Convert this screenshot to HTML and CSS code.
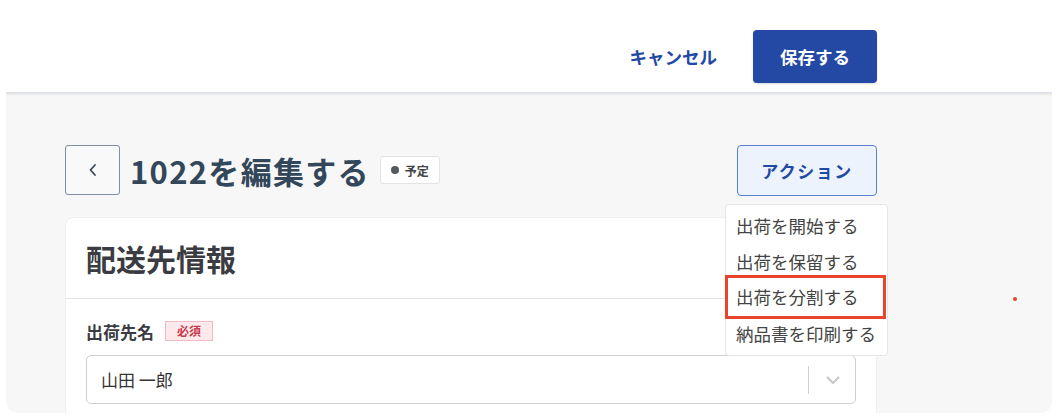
FILE: index.html
```html
<!DOCTYPE html>
<html lang="ja">
<head>
<meta charset="utf-8">
<link rel="stylesheet" href="styles.css">
</head>
<body>
<div class="frame">
  <header class="topbar">
    <div class="topbar-inner">
      <button class="btn-cancel">キャンセル</button>
      <button class="btn-save">保存する</button>
    </div>
  </header>
  <main class="main">
    <div class="titlerow">
      <div class="title-left">
        <button class="back">
          <svg width="10" height="14" viewBox="0 0 10 14"><path d="M7 2 L2.5 7 L7 12" fill="none" stroke="#3a4756" stroke-width="1.8" stroke-linecap="round" stroke-linejoin="round"/></svg>
        </button>
        <h1 class="title">1022を編集する</h1>
        <span class="status"><span class="dot"></span>予定</span>
      </div>
      <div class="actions">
        <button class="btn-action">アクション</button>
        <ul class="menu">
          <li>出荷を開始する</li>
          <li>出荷を保留する</li>
          <li class="highlight">出荷を分割する</li>
          <li>納品書を印刷する</li>
        </ul>
      </div>
    </div>
    <section class="card">
      <div class="card-head">配送先情報</div>
      <div class="card-body">
        <div class="label">出荷先名<span class="req">必須</span></div>
        <div class="select">
          <span class="value">山田 一郎</span>
          <span class="sep"></span>
          <svg class="chev" width="16" height="10" viewBox="0 0 16 10"><path d="M2 2 L8 8 L14 2" fill="none" stroke="#c8c8c8" stroke-width="2.2"/></svg>
        </div>
        <div class="select next"></div>
      </div>
    </section>
    <span class="reddot"></span>
  </main>
</div>
</body>
</html>
```

FILE: styles.css
```css
* { box-sizing: border-box; }
html, body { margin: 0; padding: 0; background: #fff; }
body {
  font-family: "Noto Sans CJK JP", "Noto Sans", sans-serif;
  width: 1058px;
  height: 418px;
  overflow: hidden;
}
button { font-family: inherit; cursor: pointer; }
.frame {
  margin: 0 6px;
  height: 413px;
  background: #f7f7f7;
  border-radius: 0 0 12px 12px;
  overflow: hidden;
  position: relative;
}
.topbar {
  background: #fff;
  height: 94px;
  border-bottom: 2px solid #dfe2e8;
  box-shadow: 0 1px 2px rgba(0,0,0,0.05);
  margin: 0 -6px;
}
.topbar-inner {
  display: flex;
  justify-content: flex-end;
  align-items: center;
  gap: 36px;
  width: 877px;
  padding-top: 30px;
}
.btn-cancel {
  background: none;
  border: none;
  color: #2349a5;
  font-size: 17.5px;
  font-weight: 700;
  padding: 0;
}
.btn-save {
  background: #2349a5;
  color: #fff;
  border: none;
  border-radius: 4px;
  width: 124px;
  height: 53px;
  font-size: 17.5px;
  font-weight: 700;
  box-shadow: 0 1px 2px rgba(0,0,0,0.15);
}
.main {
  padding: 51px 0 0 59px;
  position: relative;
}
.titlerow {
  width: 812px;
  display: flex;
  justify-content: space-between;
  align-items: flex-start;
  position: relative;
  z-index: 2;
}
.title-left {
  display: flex;
  align-items: center;
  height: 50px;
}
.back {
  width: 55px;
  height: 50px;
  border: 1px solid #7f8ea3;
  border-radius: 3px;
  background: #f9f9f9;
  display: flex;
  align-items: center;
  justify-content: center;
  padding: 0;
}
.title {
  margin: 0 0 0 10px;
  font-size: 31px;
  font-weight: 700;
  color: #33475b;
  letter-spacing: 1.3px;
}
.status {
  margin-left: 10px;
  display: inline-flex;
  align-items: center;
  gap: 6px;
  height: 28px;
  padding: 0 10px;
  background: #fff;
  border: 1px solid #e3e3e3;
  border-radius: 3px;
  font-size: 12px;
  font-weight: 700;
  color: #444;
}
.dot {
  width: 8px;
  height: 8px;
  border-radius: 50%;
  background: #555a61;
}
.actions { position: relative; }
.btn-action {
  width: 140px;
  height: 51px;
  background: #edf3fd;
  border: 1px solid #5b80cf;
  border-radius: 4px;
  color: #2349a5;
  font-size: 17px;
  font-weight: 700;
  letter-spacing: 1.5px;
}
.menu {
  position: absolute;
  top: 59px;
  right: -11px;
  width: 163px;
  margin: 0;
  padding: 3px 0 4px;
  list-style: none;
  background: #fff;
  border: 1px solid #e6e6e6;
  border-radius: 4px;
}
.menu li {
  height: 35.5px;
  line-height: 35px;
  padding-left: 10px;
  font-size: 17.5px;
  color: #444;
  white-space: nowrap;
  position: relative;
}
.menu li:last-child { margin-top: 1px; }
.menu li.highlight::after {
  content: "";
  position: absolute;
  left: -1px;
  right: 1px;
  top: -4px;
  bottom: -4px;
  border: 3px solid #e8452c;
}
.card {
  margin-top: 21px;
  width: 812px;
  background: #fff;
  border-radius: 8px;
  border: 1px solid #efefef;
  height: 220px;
}
.card-head {
  height: 81px;
  border-bottom: 1px solid #e4e4e4;
  padding: 18px 0 0 20px;
  font-size: 30px;
  font-weight: 700;
  color: #3b3b42;
}
.card-body {
  padding: 20px 20px 0 20px;
}
.label {
  display: flex;
  align-items: center;
  font-size: 17px;
  font-weight: 700;
  color: #3b3b42;
  height: 24px;
}
.req {
  margin-left: 11px;
  background: #fde9ec;
  border: 1px solid #f1b9c1;
  color: #c73a4c;
  font-size: 12px;
  font-weight: 700;
  padding: 0 11px;
  height: 20px;
  line-height: 18px;
}
.select {
  margin-top: 12px;
  height: 49px;
  border: 1px solid #cfcfcf;
  border-radius: 5px;
  display: flex;
  align-items: center;
  padding-left: 14px;
  position: relative;
}
.select .value {
  font-size: 17px;
  color: #333;
  flex: 1;
}
.select .sep {
  width: 1px;
  height: 28px;
  background: #cfcfcf;
}
.select .chev {
  margin: 0 14px 0 16px;
}
.select.next {
  margin-top: 9px;
  border-color: #ececec;
}
.reddot {
  position: absolute;
  left: 1007px;
  top: 203px;
  width: 4px;
  height: 4px;
  border-radius: 50%;
  background: #e8452c;
}
```
